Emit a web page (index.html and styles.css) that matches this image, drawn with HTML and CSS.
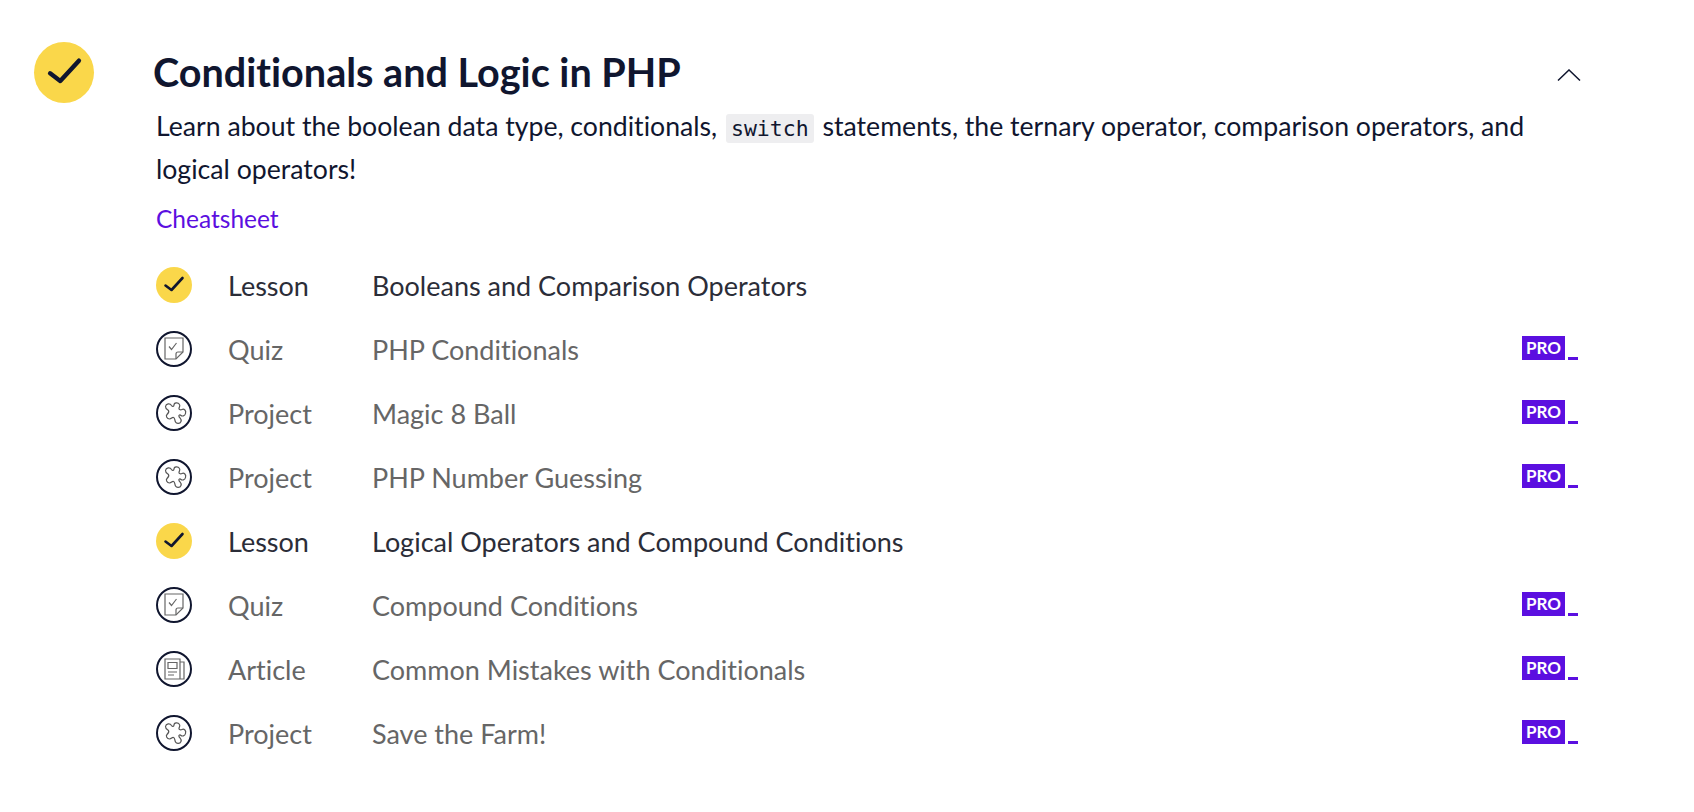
FILE: index.html
```html
<html>
<head>
  <title>Conditionals and Logic in PHP</title>
  <link rel="stylesheet" href="styles.css">
</head>
<body>
  <svg class="sprites" width="0" height="0">
    <symbol id="check" viewBox="0 0 36 36">
      <path d="M9.5 18.5l6 4.5L26.5 11" fill="none" stroke="#10162f" stroke-width="2.6" stroke-linecap="round" stroke-linejoin="round"/>
    </symbol>
    <symbol id="quiz" viewBox="0 0 36 36">
      <circle cx="18" cy="18" r="17" fill="#fff" stroke="#10162f" stroke-width="2"/>
      <path d="M9 7h18v14l-7 7h-11z" fill="none" stroke="#666" stroke-width="1.2"/>
      <path d="M27 21h-5q-2 0-2 2v5" fill="none" stroke="#666" stroke-width="1.2"/>
      <path d="M13 15.500l2.500 3 5-6.500" fill="none" stroke="#666" stroke-width="1.2"/>
    </symbol>
    <symbol id="project" viewBox="0 0 36 36">
      <circle cx="18" cy="18" r="17" fill="#fff" stroke="#10162f" stroke-width="2"/>
      <path d="M9.500 11.500C10 8.500 14 8 15.500 10.500C16.500 12 18 11.500 18 10C18 7.500 22 7 23.500 9.500C24.500 11 23 12.500 23 13.500C23 15 25 15 26 14.500C28 13.500 30.500 15.500 29.500 18.500C29 21 26 21.500 25 20.500C24 19.500 22.500 20 23 21.500C23.500 23 26 24 25 26.500C24 29 20.500 29 19.500 27C18.500 25 19 23 17.500 22.500C16 22 15.500 24 13.500 24C11 24 9.500 21 11 19.500C12.500 18 13.500 17 12.500 15.500C11.500 14.500 9.500 14 9.500 11.500Z" fill="none" stroke="#555" stroke-width="1.2"/>
    </symbol>
    <symbol id="article" viewBox="0 0 36 36">
      <circle cx="18" cy="18" r="17" fill="#fff" stroke="#10162f" stroke-width="2"/>
      <path d="M9 8h15v20h-15zM24 11h4v17h-4" fill="none" stroke="#666" stroke-width="1.2"/>
      <path d="M12 11.500h9v6h-9zM12 21h9M12 24h6" fill="none" stroke="#666" stroke-width="1.2"/>
    </symbol>
  </svg>

  <section class="module">
    <div class="module-badge">
      <svg class="check-big"><use href="#check"/></svg>
    </div>
    <div class="module-body">
      <div class="module-head">
        <h2>Conditionals and Logic in PHP</h2>
        <svg class="chevron" viewBox="0 0 24 12"><path d="M1 11.500L12 1l11 10.500" fill="none" stroke="#10162f" stroke-width="1.500"/></svg>
      </div>
      <p class="desc">Learn about the boolean data type, conditionals, <code>switch</code> statements, the ternary operator, comparison operators, and logical operators!</p>
      <a class="cheat" href="#">Cheatsheet</a>
      <ul class="items">
        <li class="item done">
          <span class="dot"><svg><use href="#check"/></svg></span>
          <span class="kind">Lesson</span>
          <span class="name">Booleans and Comparison Operators</span>
        </li>
        <li class="item">
          <svg class="icon"><use href="#quiz"/></svg>
          <span class="kind">Quiz</span>
          <span class="name">PHP Conditionals</span>
          <span class="pro"><b>PRO</b><i></i></span>
        </li>
        <li class="item">
          <svg class="icon"><use href="#project"/></svg>
          <span class="kind">Project</span>
          <span class="name">Magic 8 Ball</span>
          <span class="pro"><b>PRO</b><i></i></span>
        </li>
        <li class="item">
          <svg class="icon"><use href="#project"/></svg>
          <span class="kind">Project</span>
          <span class="name">PHP Number Guessing</span>
          <span class="pro"><b>PRO</b><i></i></span>
        </li>
        <li class="item done">
          <span class="dot"><svg><use href="#check"/></svg></span>
          <span class="kind">Lesson</span>
          <span class="name">Logical Operators and Compound Conditions</span>
        </li>
        <li class="item">
          <svg class="icon"><use href="#quiz"/></svg>
          <span class="kind">Quiz</span>
          <span class="name">Compound Conditions</span>
          <span class="pro"><b>PRO</b><i></i></span>
        </li>
        <li class="item">
          <svg class="icon"><use href="#article"/></svg>
          <span class="kind">Article</span>
          <span class="name">Common Mistakes with Conditionals</span>
          <span class="pro"><b>PRO</b><i></i></span>
        </li>
        <li class="item">
          <svg class="icon"><use href="#project"/></svg>
          <span class="kind">Project</span>
          <span class="name">Save the Farm!</span>
          <span class="pro"><b>PRO</b><i></i></span>
        </li>
      </ul>
    </div>
  </section>
</body>
</html>
```

FILE: styles.css
```css
/* General Reset */
body, h2, p, ul, li {
  margin: 0;
  padding: 0;
  box-sizing: border-box;
}

body {
  font-family: "Lato", sans-serif;
  font-variant-ligatures: none;
  background-color: #fff;
  color: #10162f;
}

.sprites {
  display: block;
}

/* Module layout */
.module {
  display: flex;
  padding: 42px 0 0 34px;
}

.module-badge {
  width: 60px;
  height: 61px;
  border-radius: 50%;
  background-color: #fad74a;
  flex-shrink: 0;
  display: flex;
  align-items: center;
  justify-content: center;
}

.check-big {
  width: 61px;
  height: 61px;
  flex-shrink: 0;
}

.module-body {
  width: 1429px;
  margin-left: 59px;
}

/* Heading */
.module-head {
  display: flex;
  justify-content: space-between;
  align-items: flex-start;
  height: 56px;
}

.module-head h2 {
  margin-top: 4px;
  font-size: 39.600px;
  font-weight: 700;
  line-height: 52px;
}

.chevron {
  width: 24px;
  height: 12px;
  margin-top: 27px;
  margin-right: 1px;
}

/* Description */
.desc {
  margin: 7px 0 0 3px;
  width: 1400px;
  font-size: 26.650px;
  line-height: 43px;
}

code {
  font-family: "DejaVu Sans Mono", monospace;
  font-size: 21.500px;
  line-height: 1;
  background-color: #eeeef0;
  border-radius: 3px;
  padding: 2px 5px;
  margin: 0 2px;
}

.cheat {
  display: block;
  margin: 12px 0 0 3px;
  font-size: 24.500px;
  line-height: 32px;
  color: #5b0fe0;
  text-decoration: none;
}

/* Lesson rows */
.items {
  list-style: none;
  margin-top: 18px;
  margin-left: 3px;
}

.item {
  display: flex;
  align-items: center;
  height: 64px;
  font-size: 27px;
  color: #666;
}

.item.done {
  color: #2b2d38;
}

.icon, .dot {
  width: 36px;
  height: 36px;
  flex-shrink: 0;
}

.dot {
  border-radius: 50%;
  background-color: #fad74a;
}

.dot svg {
  width: 36px;
  height: 36px;
  display: block;
}

.kind {
  margin-left: 36px;
  width: 144px;
}

.name {
  flex: 1;
}

/* Pro badge */
.pro {
  display: flex;
  align-items: flex-end;
  margin-right: 4px;
  margin-top: -2px;
}

.pro b {
  background-color: #5b0fe0;
  color: #fff;
  font-size: 17px;
  font-weight: 700;
  width: 43px;
  height: 24px;
  line-height: 24px;
  text-align: center;
}

.pro i {
  display: block;
  width: 10px;
  height: 3px;
  margin-left: 3px;
  background-color: #5b0fe0;
}
```
